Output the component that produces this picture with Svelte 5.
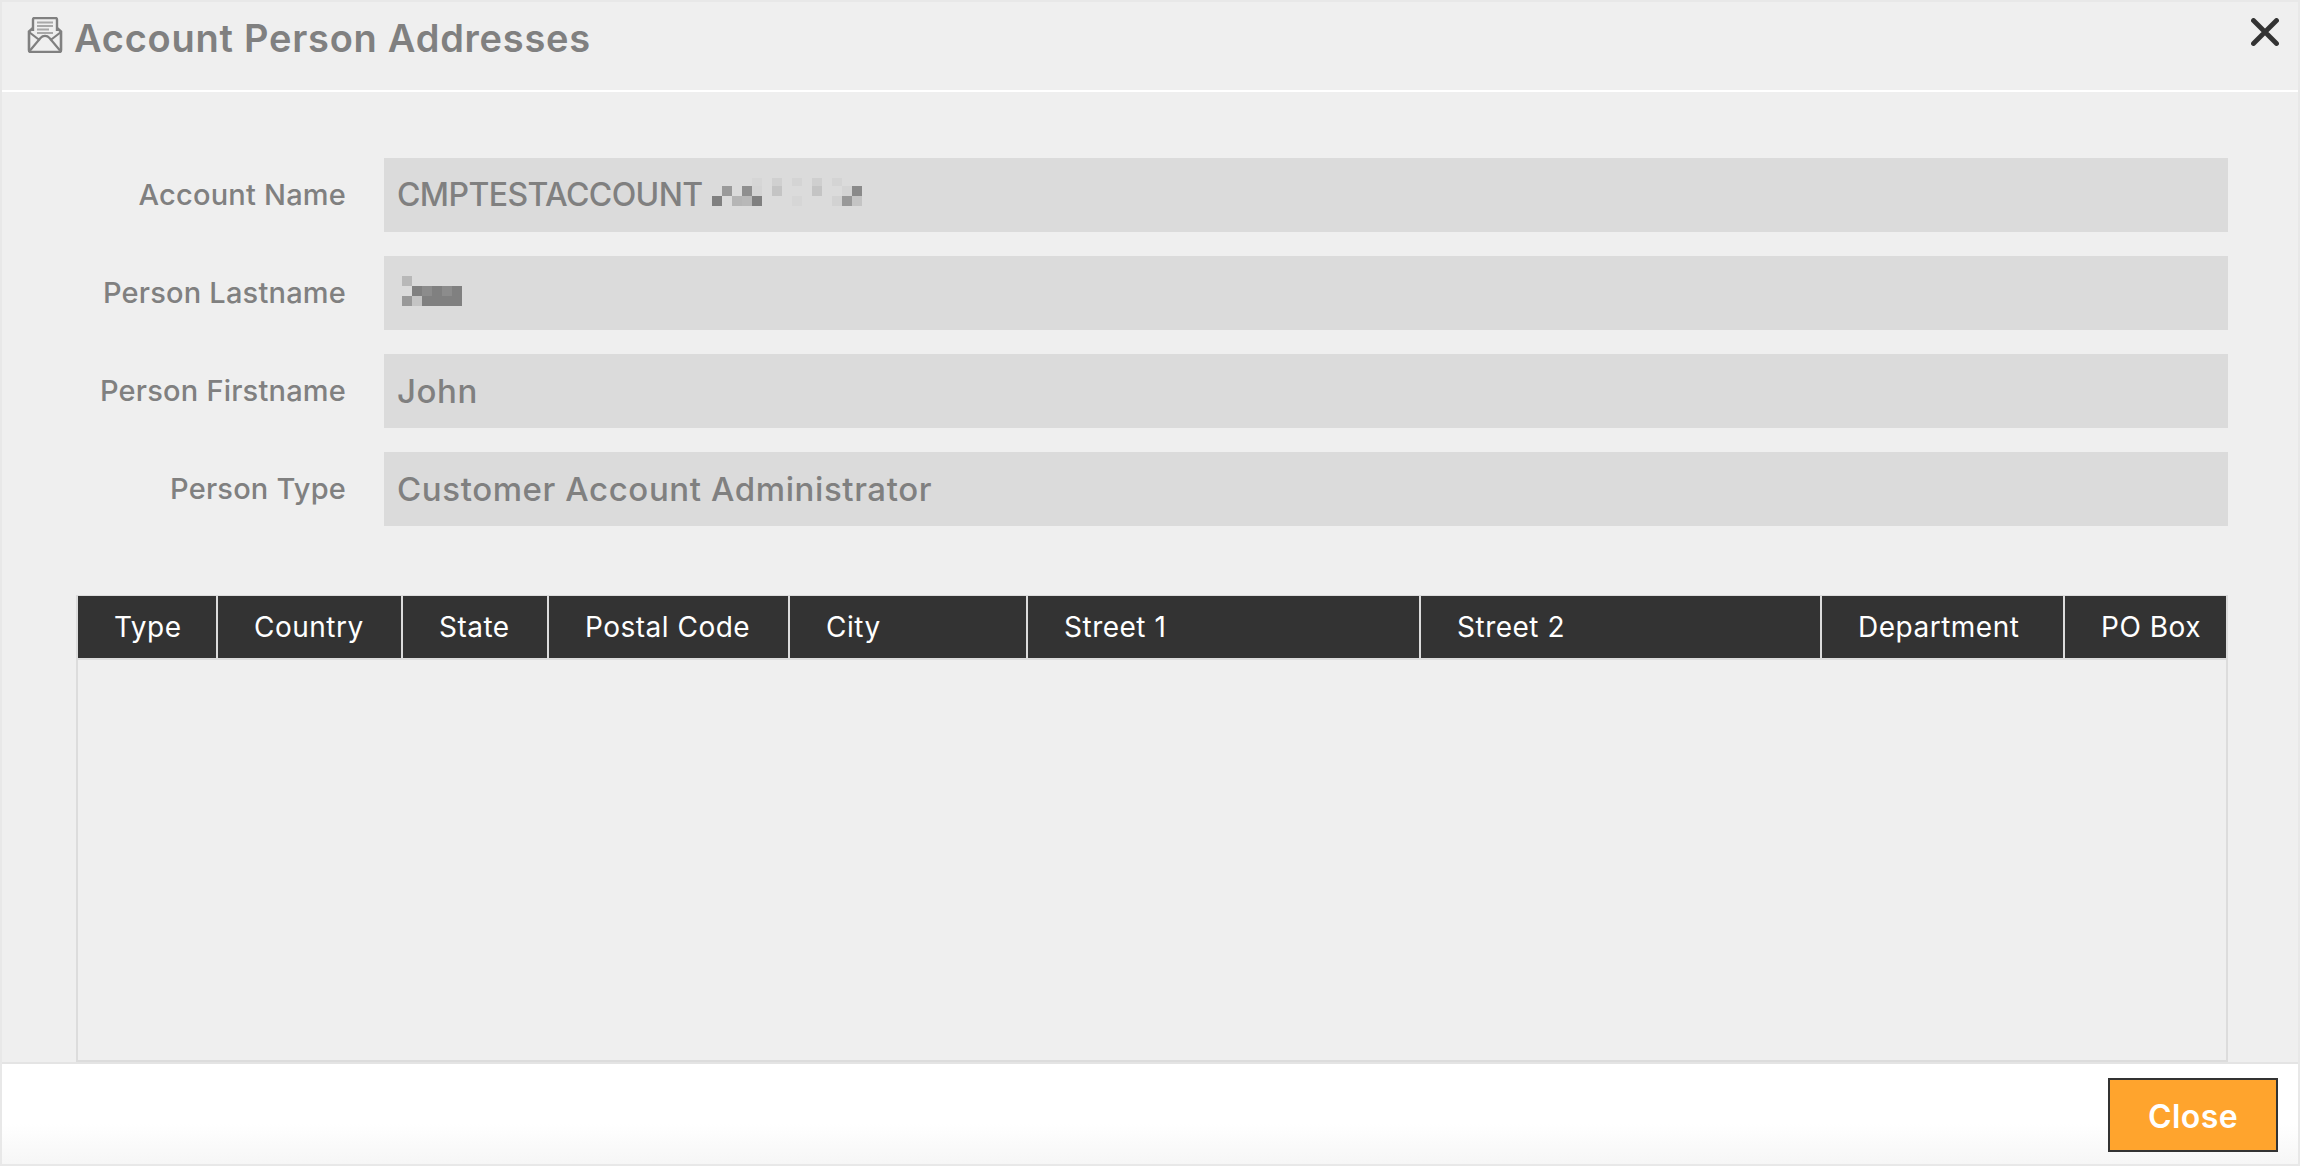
<script>
  const fields = [
    { label: 'Account Name', value: 'CMPTESTACCOUNT', caps: true, mosaic: 'account' },
    { label: 'Person Lastname', value: '', mosaic: 'lastname' },
    { label: 'Person Firstname', value: 'John' },
    { label: 'Person Type', value: 'Customer Account Administrator' }
  ];
  const columns = ['Type', 'Country', 'State', 'Postal Code', 'City', 'Street 1', 'Street 2', 'Department', 'PO Box'];
  const accountPixels = [
    [4, 0, '#d6d6d6'], [6, 0, '#d0d0d0'], [8, 0, '#d4d4d4'], [10, 0, '#cfcfcf'], [12, 0, '#d4d4d4'],
    [1, 1, '#9a9a9a'], [3, 1, '#8f8f8f'], [4, 1, '#d4d4d4'], [6, 1, '#c4c4c4'], [10, 1, '#c4c4c4'], [13, 1, '#d4d4d4'], [14, 1, '#8a8a8a'],
    [0, 2, '#808080'], [2, 2, '#b5b5b5'], [3, 2, '#b8b8b8'], [4, 2, '#808080'], [8, 2, '#d6d6d6'], [12, 2, '#d2d2d2'], [13, 2, '#999999'], [14, 2, '#c4c4c4']
  ];
  const lastnamePixels = [
    [0, 0, '#b8b8b8'],
    [1, 1, '#808080'], [2, 1, '#8c8c8c'], [3, 1, '#808080'], [4, 1, '#8c8c8c'], [5, 1, '#808080'],
    [0, 2, '#999999'], [1, 2, '#c4c4c4'], [2, 2, '#808080'], [3, 2, '#808080'], [4, 2, '#808080'], [5, 2, '#808080']
  ];
</script>

<div class="dialog">
  <header class="head">
    <svg class="mail" viewBox="0 0 36 36" aria-hidden="true">
      <path d="M6 14V2.500a1.500 1.500 0 0 1 1.500-1.500h21A1.500 1.500 0 0 1 30 2.500V14" fill="#efefef" stroke="#808080" stroke-width="2.400"/>
      <path d="M6 11l-4 3.500V33a2 2 0 0 0 2 2h28a2 2 0 0 0 2-2V14.500L30 11" fill="none" stroke="#808080" stroke-width="2.600"/>
      <path d="M2 15l11 8.500M34 15l-11 8.500M3 33.500l10.500-12.500a6 6 0 0 1 9 0L33 33.500" fill="none" stroke="#808080" stroke-width="2.200"/>
      <path d="M10 5.500h16M10 9h16M10 12.500h12M10 16h16" stroke="#a8a8a8" stroke-width="1.800"/>
    </svg>
    <h1>Account Person Addresses</h1>
    <svg class="x" viewBox="0 0 28 28" aria-hidden="true">
      <path d="M2.500 2.500l23 23M25.500 2.500l-23 23" stroke="#333" stroke-width="4.800" stroke-linecap="round"/>
    </svg>
  </header>

  <div class="form">
    {#each fields as f}
      <div class="row">
        <span class="label">{f.label}</span>
        <div class="input">
          {#if f.value}<span class="value" class:caps={f.caps}>{f.value}</span>{/if}
          {#if f.mosaic === 'account'}
            <svg class="pix account" width="150" height="28" viewBox="0 0 150 28" aria-hidden="true">
              {#each accountPixels as [c, r, col]}
                <rect x={c * 10} y={r === 0 ? 0 : r === 1 ? 8 : 18} width="10" height={r === 0 ? 8 : 10} fill={col} />
              {/each}
            </svg>
          {/if}
          {#if f.mosaic === 'lastname'}
            <svg class="pix lastname" width="60" height="30" viewBox="0 0 60 30" aria-hidden="true">
              {#each lastnamePixels as [c, r, col]}
                <rect x={c * 10} y={r * 10} width="10" height="10" fill={col} />
              {/each}
            </svg>
          {/if}
        </div>
      </div>
    {/each}
  </div>

  <div class="grid">
    <div class="thead">
      {#each columns as c}<div class="th">{c}</div>{/each}
    </div>
    <div class="tbody"></div>
  </div>

  <footer class="foot">
    <button class="close">Close</button>
  </footer>
</div>

<style>
  :global(body) { background: #efefef; }
  .dialog {
    box-sizing: border-box;
    width: 2300px;
    height: 1166px;
    border: 2px solid #e8e8e8;
    display: flex;
    flex-direction: column;
    background: #efefef;
    font-family: Inter, "Liberation Sans", sans-serif;
    overflow: hidden;
  }
  .head {
    box-sizing: border-box;
    flex: none;
    height: 90px;
    border-bottom: 2px solid #fff;
    display: flex;
    align-items: flex-start;
    position: relative;
  }
  .mail { width: 36px; height: 36px; margin: 15px 0 0 25px; flex: none; }
  h1 {
    margin: 12px 0 0 11px;
    font-size: 38px;
    line-height: 48px;
    font-weight: 600;
    color: #808080;
    letter-spacing: 0.75px;
    white-space: nowrap;
  }
  .x { position: absolute; right: 19px; top: 16px; width: 28px; height: 28px; }
  .form {
    flex: none;
    padding: 66px 70px 0 0;
    display: flex;
    flex-direction: column;
    gap: 24px;
  }
  .row { display: flex; align-items: center; height: 74px; }
  .label {
    flex: none;
    width: 344px;
    padding-bottom: 1px;
    text-align: right;
    font-size: 29px;
    font-weight: 500;
    letter-spacing: 0.2px;
    color: #808080;
    white-space: nowrap;
  }
  .input {
    margin-left: 38px;
    flex: 1;
    height: 74px;
    box-sizing: border-box;
    background: #dbdbdb;
    padding-left: 13px;
    display: flex;
    align-items: center;
    position: relative;
  }
  .value { font-size: 33px; font-weight: 500; color: #808080; letter-spacing: 0.6px; white-space: nowrap; margin-top: -1px; }
  .value.caps { font-size: 32px; letter-spacing: -0.6px; }
  .pix { position: absolute; }
  .pix.account { left: 328px; top: 20px; }
  .pix.lastname { left: 18px; top: 20px; }
  .grid {
    flex: none;
    margin: 69px 70px 0 74px;
    border: 2px solid #dcdcdc;
    border-top-width: 1px;
    height: 467px;
    box-sizing: border-box;
    display: flex;
    flex-direction: column;
  }
  .thead {
    flex: none;
    height: 64px;
    box-sizing: border-box;
    border-bottom: 2px solid #dcdcdc;
    display: grid;
    grid-template-columns: 140px 185px 146px 241px 238px 393px 401px 243px 1fr;
    background: #333;
  }
  .th {
    display: flex;
    align-items: center;
    padding-left: 36px;
    padding-bottom: 1px;
    color: #fff;
    font-size: 28px;
    font-weight: 400;
    letter-spacing: 0.5px;
    white-space: nowrap;
    border-right: 2px solid #dcdcdc;
  }
  .th:last-child { border-right: 0; }
  .tbody { flex: 1; }
  .foot {
    flex: 1;
    box-sizing: border-box;
    border-top: 2px solid #e4e4e4;
    background: linear-gradient(#fff 0%, #fff 60%, #f6f6f6 100%);
    display: flex;
    justify-content: flex-end;
    padding: 14px 20px 0 0;
  }
  .close {
    width: 170px;
    height: 74px;
    box-sizing: border-box;
    border: 2px solid #333;
    border-radius: 0;
    background: #ffa42d;
    color: #fff;
    font-family: inherit;
    font-size: 32px;
    font-weight: 600;
    letter-spacing: 0.4px;
    padding: 2px 0 0;
  }
</style>
